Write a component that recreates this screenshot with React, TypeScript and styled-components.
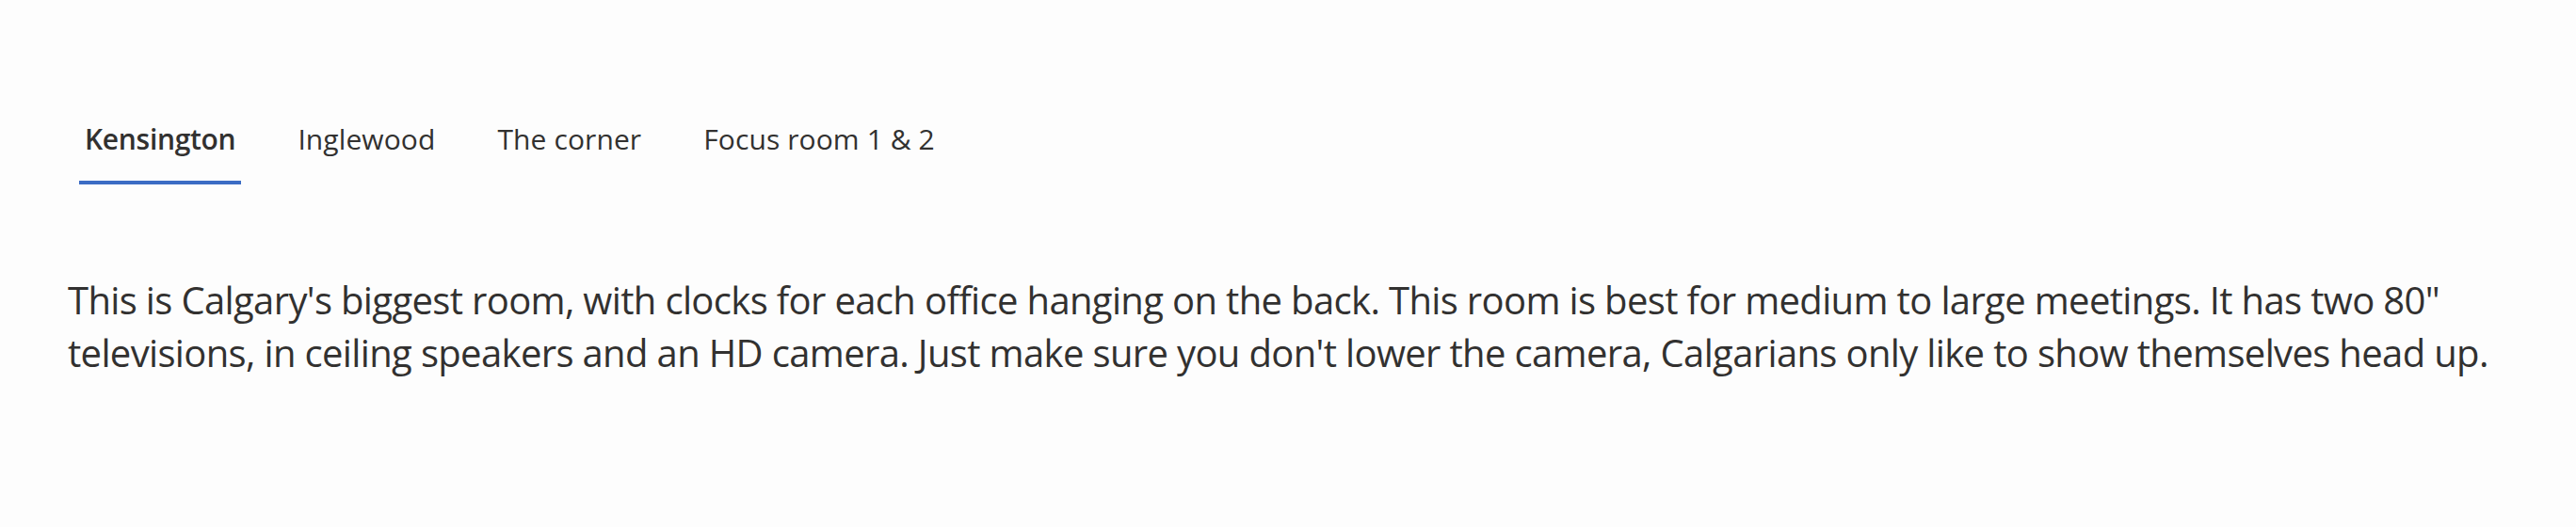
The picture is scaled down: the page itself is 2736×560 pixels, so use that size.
import { useState } from 'react';
import styled, { createGlobalStyle } from 'styled-components';

const GlobalStyle = createGlobalStyle`
  body {
    margin: 0;
    background: #fdfdfd;
    font-family: "Open Sans", "Noto Sans", sans-serif;
    color: #323130;
  }
`

const rooms = [
  {
    name: 'Kensington',
    text: "This is Calgary's biggest room, with clocks for each office hanging on the back. This room is best for medium to large meetings. It has two 80\" televisions, in ceiling speakers and an HD camera. Just make sure you don't lower the camera, Calgarians only like to show themselves head up.",
  },
  { name: 'Inglewood', text: 'Inglewood is a cozy room for small meetings.' },
  { name: 'The corner', text: 'The corner is a quiet spot for one-on-ones.' },
  { name: 'Focus room 1 & 2', text: 'Focus rooms are for heads-down work.' },
]

const RoomTabs = () => {
  const [selected, setSelected] = useState(0);

  return (
    <Page>
      <TabList role="tablist">
        {rooms.map((room, i) => (
          <Tab
            key={room.name}
            role="tab"
            $active={i === selected}
            onClick={() => setSelected(i)}
          >
            {room.name}
          </Tab>
        ))}
      </TabList>
      <Description>{rooms[selected].text}</Description>
    </Page>
  )
};

const Page = styled.div`
  padding: 128px 72px 0;
`

const TabList = styled.div`
  display: flex;
  gap: 54px;
  margin-left: 12px;
`

const Tab = styled.button<{ $active: boolean }>`
  font-family: inherit;
  font-size: 30px;
  line-height: 40px;
  font-weight: ${(p) => (p.$active ? 600 : 400)};
  letter-spacing: ${(p) => (p.$active ? '-0.3px' : '0.1px')};
  color: #323130;
  background: none;
  border: none;
  border-bottom: 4px solid ${(p) => (p.$active ? '#3b6cc4' : 'transparent')};
  padding: 0 6px 24px;
  cursor: pointer;
`

const Description = styled.p`
  margin: 95px 0 0;
  font-size: 40px;
  line-height: 56px;
  letter-spacing: -0.65px;
`

export default function App() {
  return (
    <>
      <GlobalStyle />
      <RoomTabs />
    </>
  )
}
